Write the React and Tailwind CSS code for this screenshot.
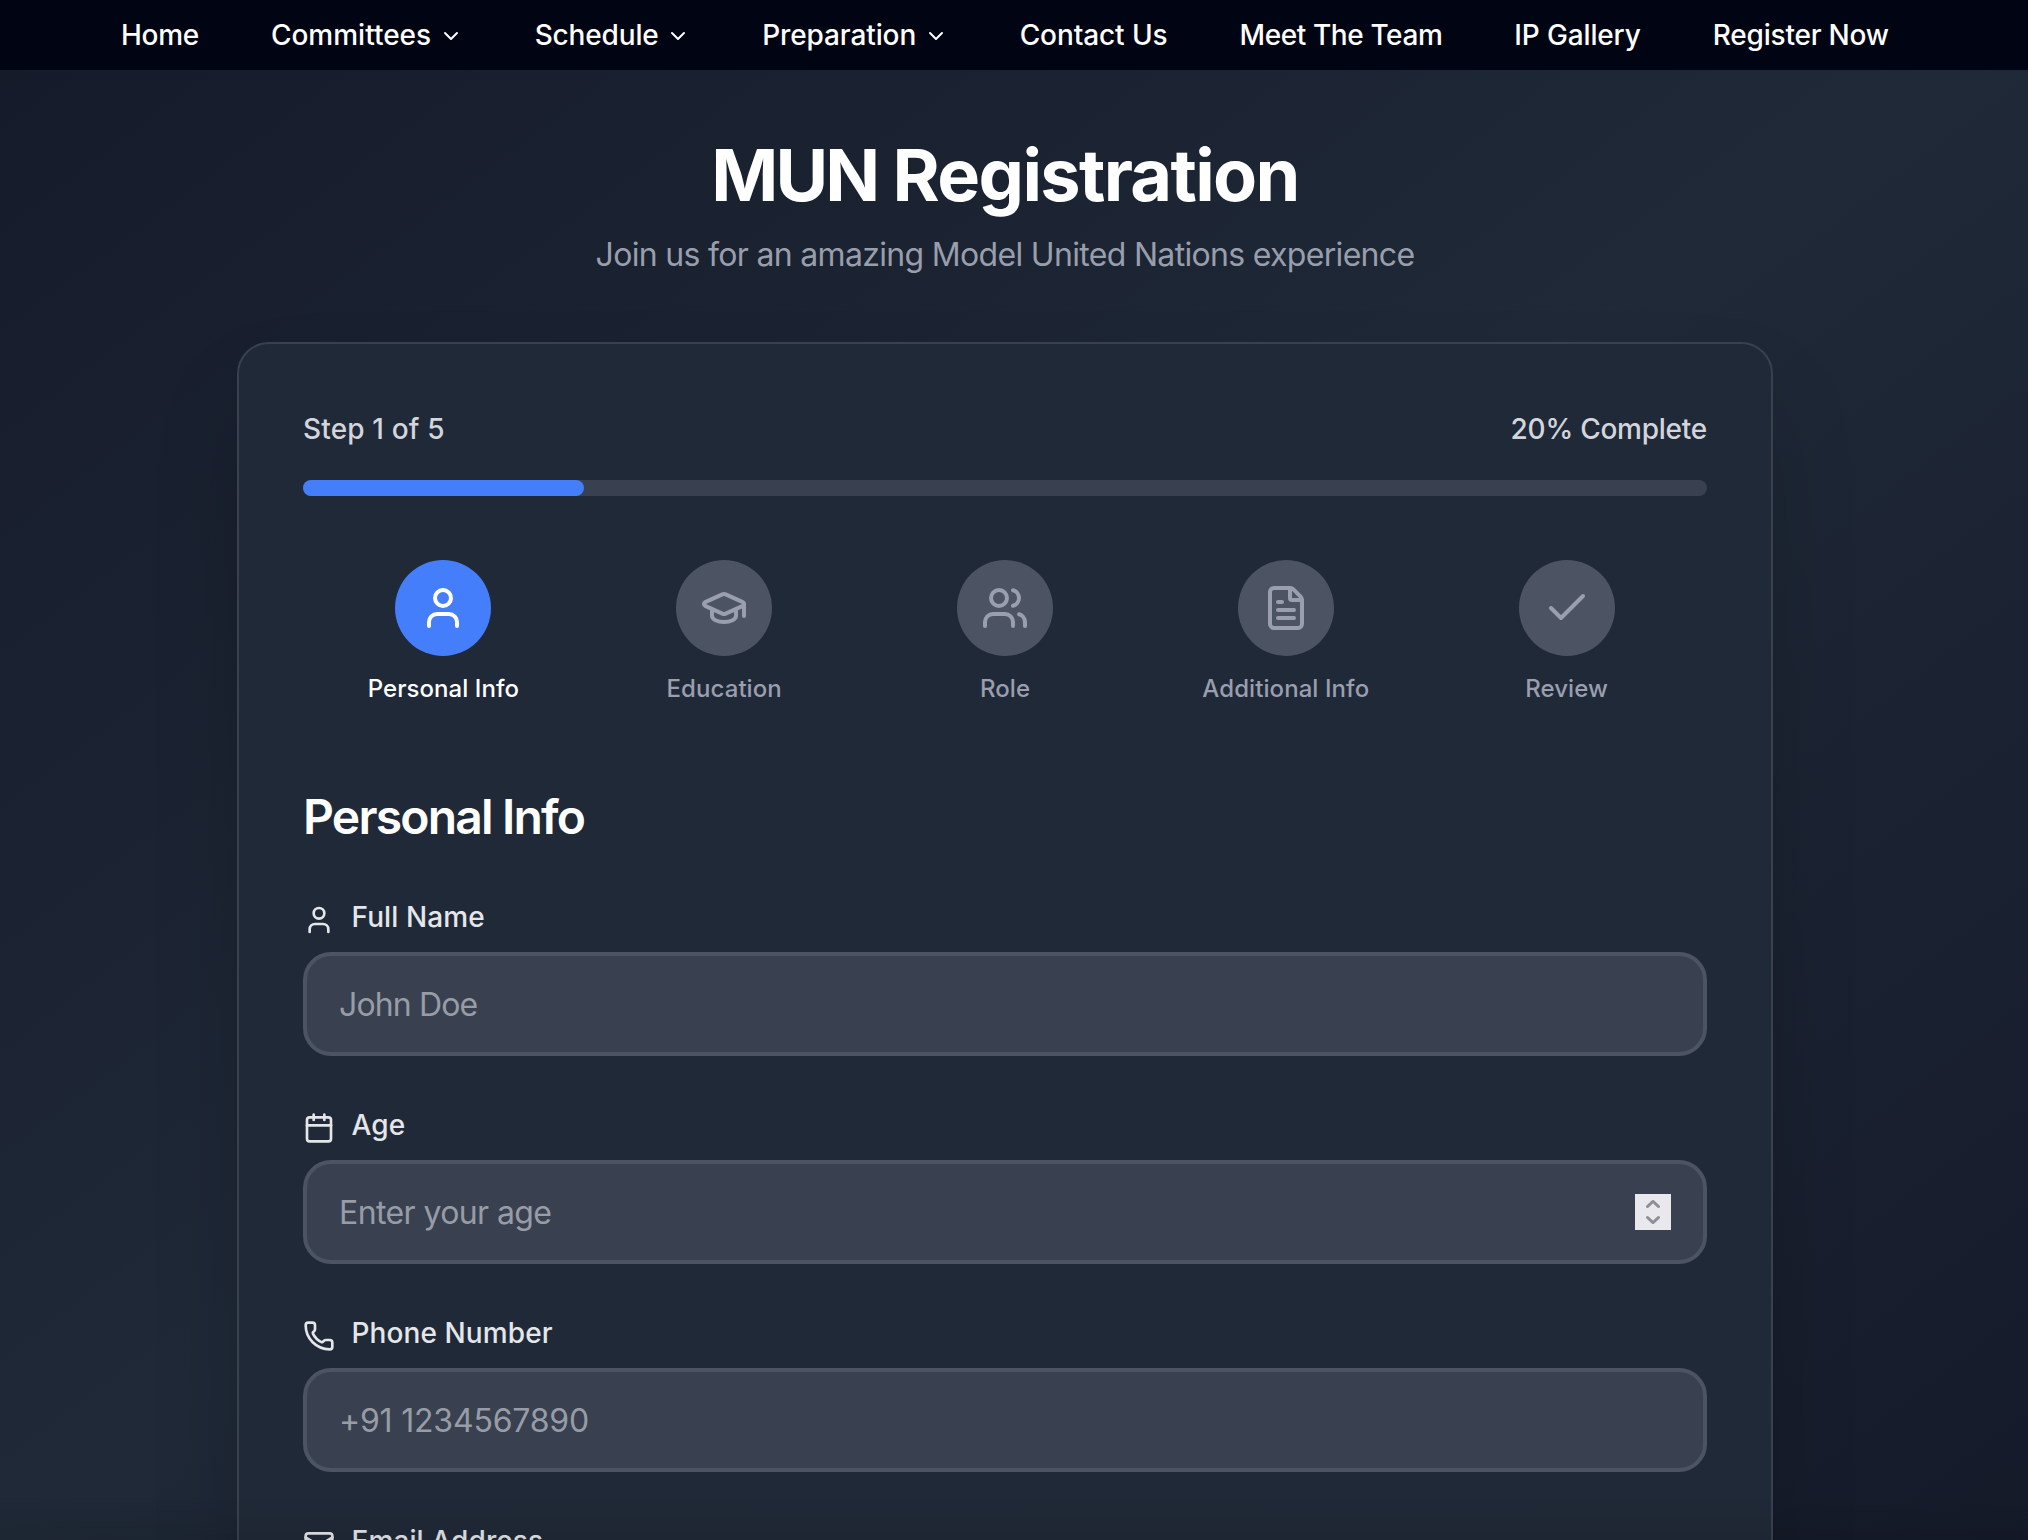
import React from "react";
import { User, Users, GraduationCap, FileText, Check, Calendar, Phone, Mail, ChevronDown } from "lucide-react";

const NAV = [
  { label: "Home", track: "tracking-[-0.3px]" },
  { label: "Committees", menu: true, track: "tracking-[0px]" },
  { label: "Schedule", menu: true, track: "tracking-[-0.15px]" },
  { label: "Preparation", menu: true, track: "tracking-[-0.1px]" },
  { label: "Contact Us", track: "tracking-[-0.1px]" },
  { label: "Meet The Team", track: "tracking-[-0.4px]" },
  { label: "IP Gallery", track: "tracking-[-0.15px]" },
  { label: "Register Now", track: "tracking-[-0.2px]" },
];

const STEPS = [
  { label: "Personal Info", icon: User, active: true },
  { label: "Education", icon: GraduationCap },
  { label: "Role", icon: Users },
  { label: "Additional Info", icon: FileText },
  { label: "Review", icon: Check },
];

const FIELDS = [
  { label: "Full Name", icon: User, placeholder: "John Doe", track: "tracking-[-0.85px]" },
  { label: "Age", icon: Calendar, placeholder: "Enter your age", track: "tracking-[-0.6px]", spinner: true },
  { label: "Phone Number", icon: Phone, placeholder: "+91 1234567890", track: "tracking-[-0.2px]" },
  { label: "Email Address", icon: Mail, placeholder: "john@example.com", track: "tracking-[-0.6px]" },
];

function Spinner() {
  return (
    <svg viewBox="0 0 36 36" className="size-9 bg-[#e9e8ed]" fill="none" stroke="#8f8e99" strokeWidth="2.8" strokeLinecap="round" strokeLinejoin="round">
      <path d="M12.4 12.6 18 7.4l5.6 5.2M12.4 23.4 18 28.6l5.6-5.2" />
    </svg>
  );
}

export default function App() {
  return (
    <div className="relative h-[1540px] overflow-hidden bg-linear-to-br/srgb from-[#151a29] via-[#1f2937] to-[#151a29] font-['Inter',sans-serif]">
      <nav className="flex h-[70px] items-center gap-[72px] bg-[#010413] pl-[121px] text-[28px] leading-10 font-[460] whitespace-nowrap text-white">
        {NAV.map((n) => (
          <a key={n.label} className="flex items-center">
            <span className={n.track}>{n.label}</span>
            {n.menu && <ChevronDown size={24} className="mt-0.5 ml-[7.5px]" />}
          </a>
        ))}
      </nav>
      <main className="flex flex-col items-center pr-[18px]">
        <h1 className="mt-[65px] text-[72px] leading-20 font-bold tracking-[-1.65px] text-white">
          <span className="tracking-[-2.9px]">MUN</span> Registration
        </h1>
        <p className="mt-4 text-[32px] leading-12 tracking-[-0.68px] text-[#999eac]">Join us for an amazing Model United Nations experience</p>
        <section className="mt-[63px] w-[1536px] rounded-[32px] border-2 border-[#394150] bg-[#202937] px-16 pt-[65px] shadow-[0_50px_100px_-24px_rgba(0,0,0,0.25)]">
          <div className="flex justify-between text-[28px] leading-10 font-[480] text-[#d3d5dc]">
            <span className="tracking-[0.15px]">Step 1 of 5</span>
            <span className="tracking-[-0.25px]">20% Complete</span>
          </div>
          <div className="mt-[31px] h-4 rounded-full bg-[#394150]">
            <div className="h-4 w-1/5 rounded-full bg-[#457efa]" />
          </div>
          <div className="mt-16 grid grid-cols-5">
            {STEPS.map((s) => (
              <div key={s.label} className="flex flex-col items-center">
                <div className={s.active ? "flex size-24 items-center justify-center rounded-full bg-[#457efa] text-white" : "flex size-24 items-center justify-center rounded-full bg-[#4c5463] text-[#9a9eae]"}>
                  <s.icon size={48} />
                </div>
                <span className={s.active ? "mt-[17px] text-[24px] leading-8 font-[480] tracking-[0.05px] text-white" : "mt-[17px] text-[24px] leading-8 font-[480] tracking-[0.08px] text-[#9a9eae]"}>{s.label}</span>
              </div>
            ))}
          </div>
          <h2 className="mt-20 text-[48px] leading-16 font-semibold tracking-[-1.8px] text-white">Personal Info</h2>
          <div className="mt-[50px] flex flex-col gap-[51px]">
            {FIELDS.map((f) => (
              <div key={f.label} className="flex flex-col">
                <label className="flex h-9 items-center text-[28px] leading-9 font-[550] tracking-[0.1px] text-[#e5e6ea]">
                  <f.icon size={32} className="mt-1.5 mr-[16.5px]" />
                  {f.label}
                </label>
                <div className="mt-[17px] flex h-[104px] items-center justify-between rounded-[28px] border-4 border-[#4c5463] bg-[#394150] px-8 text-[32px] text-[#989ca6]">
                  <span className={f.track}><span className="relative top-px">{f.placeholder}</span></span>
                  {f.spinner && <Spinner />}
                </div>
              </div>
            ))}
          </div>
        </section>
      </main>
      <div className="pointer-events-none absolute inset-x-0 bottom-0 h-12 bg-linear-to-b from-transparent to-black/8" />
    </div>
  );
}
